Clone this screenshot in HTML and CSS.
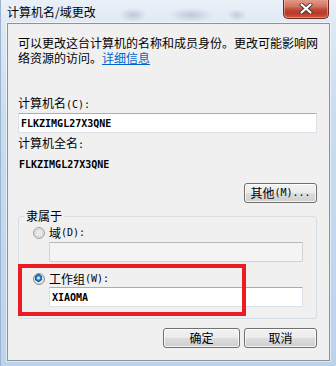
FILE: index.html
```html
<!DOCTYPE html>
<html lang="zh-CN">
<head>
<meta charset="utf-8">
<title>计算机名/域更改</title>
<link rel="stylesheet" href="styles.css">
</head>
<body>
<div class="window">
  <div class="titlebar">
    <span class="title">计算机名/域更改</span>
    <div class="close">
      <svg width="14" height="11" viewBox="0 0 14 11">
        <path d="M2.5 1.5 L11.5 9.5 M11.5 1.5 L2.5 9.5" stroke="#3b3b3b" stroke-width="4" stroke-linecap="round"/>
        <path d="M2.5 1.5 L11.5 9.5 M11.5 1.5 L2.5 9.5" stroke="#ffffff" stroke-width="2.2" stroke-linecap="round"/>
      </svg>
    </div>
  </div>
  <div class="content">
    <p class="intro">可以更改这台计算机的名称和成员身份。更改可能影响网络资源的访问。<a class="link" href="#">详细信息</a></p>
    <div class="label gap-name">计算机名<span class="m">(C):</span></div>
    <div class="input"><span class="m val">FLKZIMGL27X3QNE</span></div>
    <div class="label gap-full">计算机全名<span class="m">:</span></div>
    <div class="value"><span class="m val">FLKZIMGL27X3QNE</span></div>
    <div class="row-right">
      <button class="btn btn-other" type="button">其他<span class="m">(M)...</span></button>
    </div>
    <fieldset class="group">
      <legend class="legend">隶属于</legend>
      <div class="radio-row first"><span class="radio"></span>域<span class="m">(D):</span></div>
      <div class="input sub disabled"></div>
      <div class="radio-row second"><span class="radio checked"></span>工作组<span class="m">(W):</span></div>
      <div class="input sub"><span class="m val">XIAOMA</span></div>
    </fieldset>
    <div class="buttons">
      <button class="btn btn-ok" type="button">确定</button>
      <button class="btn btn-cancel" type="button">取消</button>
    </div>
  </div>
  <div class="highlight"></div>
</div>
</body>
</html>
```

FILE: styles.css
```css
* { box-sizing: border-box; }
html, body { margin: 0; padding: 0; background: #ffffff; }
body {
  font-family: "Noto Sans CJK SC", "Noto Sans", sans-serif;
  font-size: 12px;
  color: #000;
}
.window {
  position: relative;
  width: 336px;
  height: 366px;
  padding: 0 6px 5px 6px;
  display: flex;
  flex-direction: column;
  background:
    radial-gradient(ellipse 14px 7px at 132px 15px, rgba(120,135,160,0.35), rgba(120,135,160,0) 100%),
    radial-gradient(ellipse 22px 7px at 190px 15px, rgba(120,135,160,0.35), rgba(120,135,160,0) 100%),
    radial-gradient(ellipse 10px 6px at 236px 15px, rgba(120,135,160,0.3), rgba(120,135,160,0) 100%),
    linear-gradient(to bottom, #eaf0f8 0px, #dde8f4 28px, #c9dcf0 120px, #bcd3ec 366px);
  border-left: 1px solid #9db4cf;
}
.titlebar {
  height: 28px;
  display: flex;
  align-items: center;
  position: relative;
}
.title {
  font-size: 12px;
  line-height: 14px;
  margin-top: 1px;
  color: #000;
}
.close {
  position: absolute;
  right: 1px;
  top: -1px;
  width: 46px;
  height: 20px;
  border: 1px solid #6b2a22;
  border-top: none;
  border-radius: 0 0 5px 5px;
  background: linear-gradient(to bottom, #e6a08e 0%, #d0735f 40%, #c14a37 55%, #b8382a 75%, #d2573a 100%);
  box-shadow: inset 0 0 0 1px rgba(255,210,200,0.45);
  display: flex;
  align-items: center;
  justify-content: center;
}
.content {
  flex: 1;
  background: #f0f0f0;
  border: 1px solid #8a929c;
  box-shadow: 0 0 0 1px rgba(255,255,255,0.55);
  padding: 11px 12px 12px 10px;
  display: flex;
  flex-direction: column;
}
.m {
  font-family: "DejaVu Sans Mono", "Liberation Mono", monospace;
  font-size: 10px;
}
.val { font-weight: bold; }
.intro {
  margin: 0;
  width: 304px;
  line-height: 15px;
}
.link {
  color: #0066cc;
  text-decoration: underline;
}
.label { line-height: 14px; }
.gap-name { margin-top: 31px; }
.gap-full { margin-top: 3px; }
.input {
  height: 20px;
  margin-top: 1px;
  background: #ffffff;
  border: 1px solid #dbe1e8;
  border-top-color: #abadb3;
  padding-left: 2px;
  display: flex;
  align-items: center;
}
.value {
  margin-top: 4px;
  line-height: 14px;
  padding-left: 1px;
}
.row-right {
  margin-top: 11px;
  display: flex;
  justify-content: flex-end;
}
.btn {
  font-family: "Noto Sans CJK SC", "Noto Sans", sans-serif;
  font-size: 12px;
  color: #000;
  height: 20px;
  width: 73px;
  padding: 0;
  border: 1px solid #707070;
  border-radius: 3px;
  background: linear-gradient(to bottom, #f2f2f2 0%, #ebebeb 50%, #dddddd 51%, #cfcfcf 100%);
  box-shadow: inset 0 0 0 1px rgba(255,255,255,0.75);
  display: flex;
  align-items: center;
  justify-content: center;
  line-height: 14px;
}
.group {
  margin: 6px 0 0 0;
  padding: 0 13px 11px 0;
  border: 1px solid #d5dfe5;
  border-radius: 3px;
  min-width: 0;
}
.legend {
  margin-left: 5px;
  padding: 0 2px;
  line-height: 14px;
}
.radio-row {
  display: flex;
  align-items: center;
  line-height: 14px;
  padding-left: 14px;
}
.radio-row.first { margin-top: 3px; }
.radio-row.second { margin-top: 10px; }
.radio {
  width: 12px;
  height: 12px;
  border-radius: 50%;
  border: 1px solid #a2a2a2;
  background: radial-gradient(circle at 50% 50%, #e8e8e8 0 3px, #d4d4d4 4px, #f4f4f4 6px);
  margin-right: 4px;
  flex: none;
}
.radio.checked {
  border-color: #8e8f8f;
  background:
    radial-gradient(circle at 45% 40%, #bfe6ff 0 1px, #2a8ad4 2px, #0c4e9c 3.5px, rgba(12,78,156,0) 4px),
    radial-gradient(circle at 50% 50%, #e6e6e6 0 4px, #d6d6d6 5px, #f6f6f6 6px);
}
.input.sub { margin-left: 30px; }
.input.disabled {
  margin-top: 2px;
  background: #f4f4f4;
  border-color: #cfd3d8;
  border-top-color: #b8babe;
}
.buttons {
  margin-top: 9px;
  display: flex;
  justify-content: flex-end;
  gap: 4px;
}
.btn-ok { width: 77px; }
.highlight {
  position: absolute;
  left: 17px;
  top: 264px;
  width: 228px;
  height: 52px;
  border: 4px solid #ec1c24;
}
```
